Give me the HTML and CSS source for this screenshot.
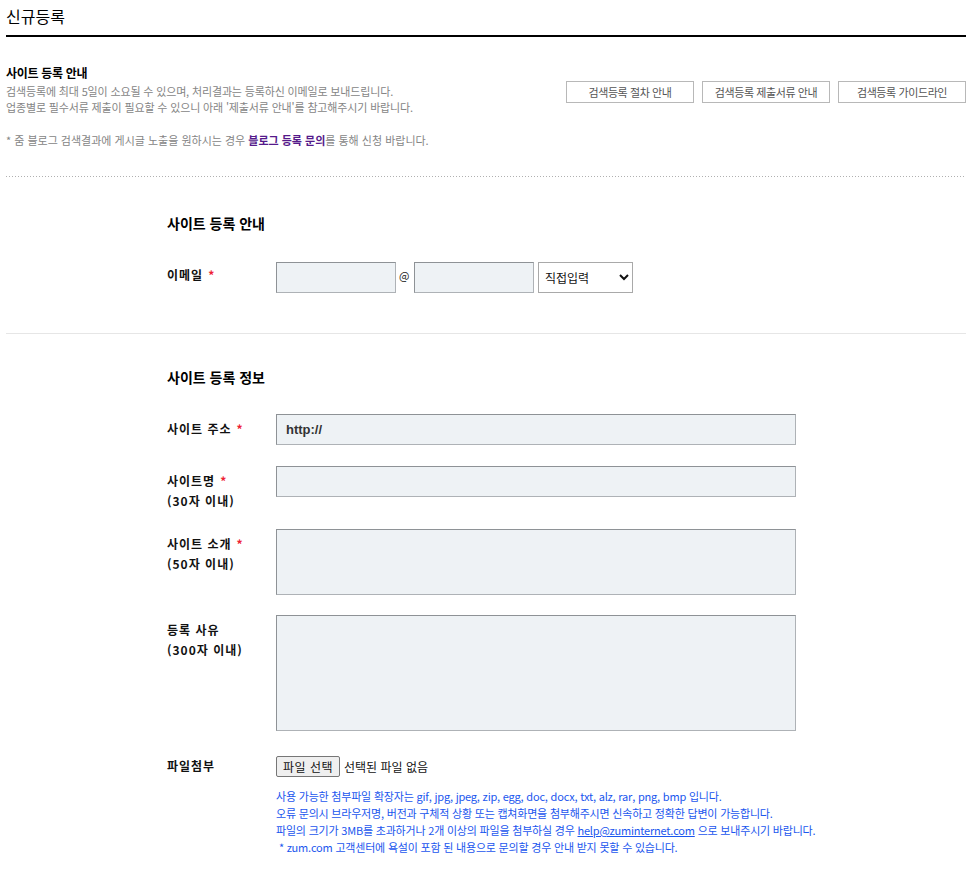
FILE: index.html
```html
<!DOCTYPE html>
<html lang="ko">
<head>
<meta charset="utf-8">
<title>신규등록</title>
<link rel="stylesheet" href="styles.css">
</head>
<body>
<div class="page">
  <h1 class="page-title">신규등록</h1>

  <div class="guide">
    <div class="guide-text">
      <h2 class="guide-title">사이트 등록 안내</h2>
      <p class="guide-desc">검색등록에 최대 5일이 소요될 수 있으며, 처리결과는 등록하신 이메일로 보내드립니다.<br>업종별로 필수서류 제출이 필요할 수 있으니 아래 '제출서류 안내'를 참고해주시기 바랍니다.</p>
      <p class="guide-note">* 줌 블로그 검색결과에 게시글 노출을 원하시는 경우 <a class="guide-link">블로그 등록 문의</a>를 통해 신청 바랍니다.</p>
    </div>
    <div class="guide-btns">
      <button class="btn" type="button">검색등록 절차 안내</button>
      <button class="btn" type="button">검색등록 제출서류 안내</button>
      <button class="btn" type="button">검색등록 가이드라인</button>
    </div>
  </div>
  <div class="divider-dotted"></div>

  <section class="form-sec form-sec--first">
    <h3 class="sec-title">사이트 등록 안내</h3>
    <div class="row row--email">
      <div class="row-label">이메일<span class="req">*</span></div>
      <div class="row-field email-field">
        <input class="inp inp--email" type="text">
        <span class="at">@</span>
        <input class="inp inp--email" type="text">
        <select class="sel">
          <option>직접입력</option>
        </select>
      </div>
    </div>
  </section>

  <section class="form-sec form-sec--second">
    <h3 class="sec-title">사이트 등록 정보</h3>
    <div class="row">
      <div class="row-label">사이트 주소<span class="req">*</span></div>
      <div class="row-field"><input class="inp inp--wide inp--url" type="text" value="http://"></div>
    </div>
    <div class="row row--name">
      <div class="row-label">사이트명<span class="req">*</span><br>(30자 이내)</div>
      <div class="row-field"><input class="inp inp--wide" type="text"></div>
    </div>
    <div class="row row--intro">
      <div class="row-label">사이트 소개<span class="req">*</span><br>(50자 이내)</div>
      <div class="row-field"><textarea class="inp inp--wide ta ta--short"></textarea></div>
    </div>
    <div class="row">
      <div class="row-label">등록 사유<br>(300자 이내)</div>
      <div class="row-field"><textarea class="inp inp--wide ta ta--tall"></textarea></div>
    </div>
    <div class="row row--file">
      <div class="row-label">파일첨부</div>
      <div class="row-field">
        <div class="file-pick">
          <button class="file-btn" type="button">파일 선택</button>
          <span class="file-name">선택된 파일 없음</span>
        </div>
        <p class="notes">사용 가능한 첨부파일 확장자는 gif, jpg, jpeg, zip, egg, doc, docx, txt, alz, rar, png, bmp 입니다.<br>오류 문의시 브라우저명, 버전과 구체적 상황 또는 캡쳐화면을 첨부해주시면 신속하고 정확한 답변이 가능합니다.<br>파일의 크기가 3MB를 초과하거나 2개 이상의 파일을 첨부하실 경우 <a class="notes-link">help@zuminternet.com</a> 으로 보내주시기 바랍니다.<br>&nbsp;* zum.com 고객센터에 욕설이 포함 된 내용으로 문의할 경우 안내 받지 못할 수 있습니다.</p>
      </div>
    </div>
  </section>
</div>
</body>
</html>
```

FILE: styles.css
```css
* { box-sizing: border-box; }

body {
  margin: 0;
  background: #fff;
  font-family: "Noto Sans CJK KR", "Noto Sans", sans-serif;
  color: #000;
}

.page {
  width: 960px;
  margin-left: 6px;
}

.page-title {
  margin: 0;
  font-size: 16px;
  font-weight: normal;
  line-height: 20px;
  padding: 6px 0 9px;
  border-bottom: 2px solid #000;
}

.guide {
  display: flex;
  justify-content: space-between;
  padding: 28px 0 28px;
}

.guide-title {
  margin: 0 0 2px;
  font-size: 12px;
  font-weight: bold;
  line-height: 16px;
  letter-spacing: -0.3px;
}

.guide-desc,
.guide-note {
  margin: 0;
  font-size: 11px;
  line-height: 16px;
  color: #858585;
  letter-spacing: -0.15px;
}

.guide-note {
  margin-top: 17px;
  letter-spacing: 0;
}

.guide-link {
  color: #551a8b;
  font-weight: bold;
}

.guide-btns {
  display: flex;
  gap: 8px;
  margin-top: 16px;
  align-self: flex-start;
}

.btn {
  width: 128px;
  height: 22px;
  padding: 0;
  background: #fff;
  border: 1px solid #b8b8b8;
  font-family: inherit;
  font-size: 11px;
  color: #555;
  letter-spacing: -0.4px;
  line-height: 20px;
}

.divider-dotted {
  height: 1px;
  background-image: linear-gradient(to right, #b0b0b0 1px, transparent 1px);
  background-size: 3px 1px;
}

.form-sec {
  padding-left: 161px;
}

.form-sec--first {
  padding-top: 36px;
  padding-bottom: 40px;
  border-bottom: 1px solid #e6e6e6;
}

.form-sec--second {
  padding-top: 33px;
  padding-bottom: 30px;
}

.sec-title {
  margin: 0 0 29px;
  font-size: 14px;
  font-weight: bold;
  line-height: 20px;
}

.form-sec--second .sec-title {
  margin-bottom: 27px;
}

.row {
  display: flex;
}

.row + .row {
  margin-top: 20px;
}

.row.row--name {
  margin-top: 21px;
}

.row.row--intro {
  margin-top: 18px;
}

.row-label {
  width: 109px;
  flex: none;
  padding-top: 5px;
  font-size: 12px;
  font-weight: bold;
  line-height: 20px;
  letter-spacing: 1px;
  color: #111;
}

.row--email .row-label {
  padding-top: 3px;
}

.req {
  color: #ee2233;
  margin-left: 5px;
}

.email-field {
  display: flex;
  align-items: center;
}

.inp {
  height: 31px;
  background: #eef2f5;
  border: 1px solid;
  border-color: #8e9296 #aeb2b6 #aeb2b6 #8e9296;
  border-radius: 0;
  padding: 0 9px;
  font-family: inherit;
  font-size: 12px;
  color: #333;
  outline: none;
}

.inp--email {
  width: 120px;
}

.at {
  width: 18px;
  padding-left: 3px;
  font-size: 11px;
  line-height: 14px;
  align-self: flex-start;
  padding-top: 6px;
  color: #222;
}

.sel {
  margin-left: 4px;
  width: 95px;
  height: 31px;
  border: 1px solid #a9a9a9;
  border-radius: 0;
  background: #fff;
  font-family: inherit;
  font-size: 12px;
  color: #111;
  padding-left: 2px;
}

.inp--wide {
  width: 520px;
  display: block;
}

.inp--url {
  font-weight: bold;
  font-size: 13px;
  font-family: "Liberation Sans", "Noto Sans CJK KR", sans-serif;
}

.ta {
  resize: none;
  padding: 6px 9px;
}

.ta--short { height: 66px; }
.ta--tall { height: 116px; }

.row.row--file {
  margin-top: 25px;
}

.row--file .row-label {
  padding-top: 0;
}

.file-pick {
  display: flex;
  align-items: center;
  height: 21px;
}

.file-btn {
  height: 21px;
  padding: 0 6px;
  background: #efefef;
  border: 1px solid #767676;
  border-radius: 2px;
  font-family: inherit;
  font-size: 12px;
  color: #111;
  letter-spacing: 0.5px;
  line-height: 19px;
}

.file-name {
  margin-left: 4px;
  font-size: 12px;
  color: #111;
}

.notes {
  margin: 11px 0 0;
  font-size: 11px;
  line-height: 17px;
  color: #1a56ee;
  letter-spacing: -0.2px;
}

.notes-link {
  color: #1a56ee;
  text-decoration: underline;
}
```
